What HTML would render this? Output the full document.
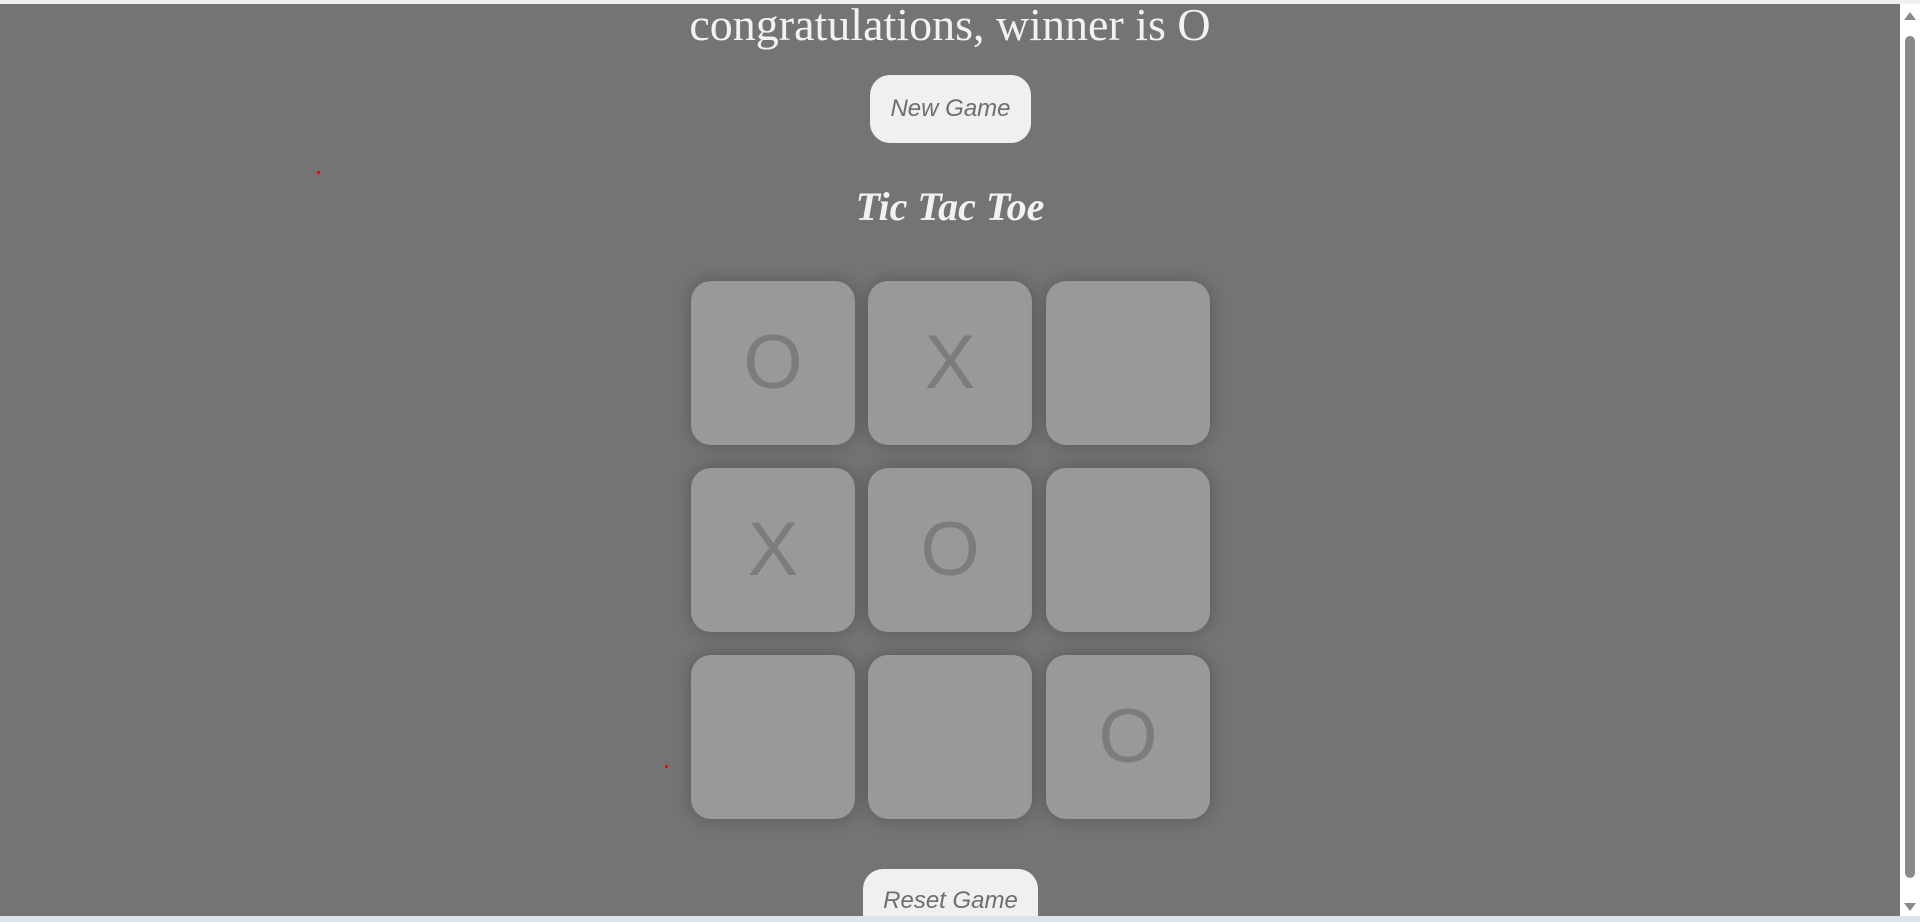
<!DOCTYPE html>
<html><head><style>
html,body{margin:0;padding:0;width:1920px;height:922px;overflow:hidden;background:#747474;}
.wrap{position:relative;width:1920px;height:922px;overflow:hidden;}
.top{position:absolute;left:0;top:0;width:1920px;height:4px;background:#f0f0f0;}
.bot{position:absolute;left:0;top:916px;width:1920px;height:6px;background:#dde3ea;}
.sb{position:absolute;left:1900px;top:4px;width:20px;height:912px;background:#fff;}
.thumb{position:absolute;left:1905px;top:36px;width:10px;height:842px;background:#8a8a8a;border-radius:5px;}
.up{position:absolute;left:1904px;top:12px;width:0;height:0;border-left:6px solid transparent;border-right:6px solid transparent;border-bottom:8px solid #8a8a8a;}
.dn{position:absolute;left:1904px;top:903px;width:0;height:0;border-left:6px solid transparent;border-right:6px solid transparent;border-top:8px solid #8a8a8a;}
h1{position:absolute;left:0;width:1900px;top:-2px;margin:0;text-align:center;font:46px "Liberation Serif",serif;color:#f2f2f2;font-weight:normal;line-height:54px;}
.btn{position:absolute;background:#f0f0f0;border-radius:20px;font:italic 24px "Liberation Sans",sans-serif;color:#6e6e6e;text-align:center;}
h2{position:absolute;left:0;width:1900px;top:183px;margin:0;text-align:center;font:italic bold 40px "Liberation Serif",serif;color:#f2f2f2;line-height:48px;}
.c{position:absolute;width:164px;height:164px;background:#999;border-radius:20px;box-shadow:0 0 18px rgba(0,0,0,.25);font:76px "Liberation Sans",sans-serif;color:#7c7c7c;text-align:center;line-height:164px;}
.dot{position:absolute;width:3px;height:3px;background:#e00;border-radius:50%;}
</style></head><body><div class="wrap">
<div class="top"></div>
<h1>congratulations, winner is O</h1>
<div class="btn" style="left:870px;top:75px;width:161px;height:68px;line-height:68px;">New Game</div>
<h2>Tic Tac Toe</h2>
<div class="dot" style="left:317px;top:171px"></div>
<div class="dot" style="left:665px;top:765px"></div>
<div class="c" style="left:691px;top:281px">O</div>
<div class="c" style="left:868px;top:281px">X</div>
<div class="c" style="left:1046px;top:281px"></div>
<div class="c" style="left:691px;top:468px">X</div>
<div class="c" style="left:868px;top:468px">O</div>
<div class="c" style="left:1046px;top:468px"></div>
<div class="c" style="left:691px;top:655px"></div>
<div class="c" style="left:868px;top:655px"></div>
<div class="c" style="left:1046px;top:655px">O</div>
<div class="btn" style="left:863px;top:869px;width:175px;height:47px;line-height:64px;border-radius:20px 20px 0 0;overflow:hidden;">Reset Game</div>
<div class="bot"></div>
<div class="sb"></div><div class="thumb"></div><div class="up"></div><div class="dn"></div>
</div></body></html>
